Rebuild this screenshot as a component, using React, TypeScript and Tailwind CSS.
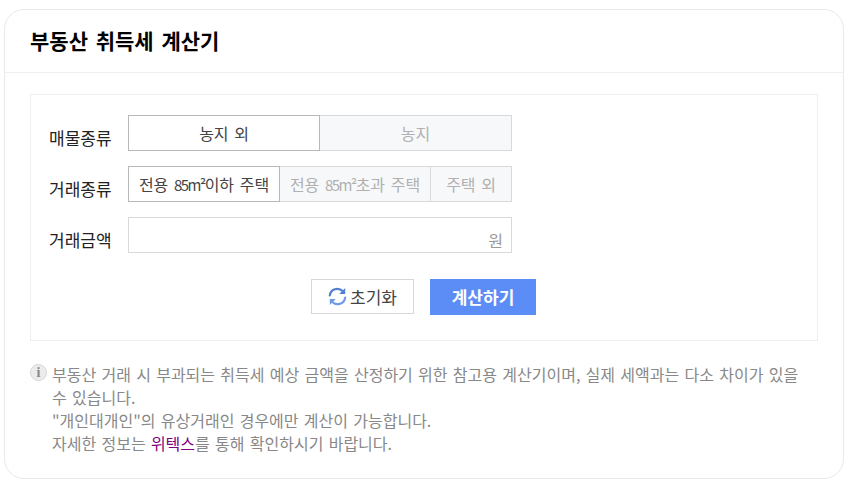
const font = '"Noto Sans CJK KR", "Noto Sans", sans-serif';

function Label({ children }: { children: React.ReactNode }) {
  return <div className="w-[97px] pl-[18px] pt-[10px] text-[17px] leading-[26px] text-[#222] [word-spacing:2px]">{children}</div>;
}

function Segment({ children, width, active }: { children: React.ReactNode; width: string; active?: boolean }) {
  return (
    <button
      className={
        active
          ? `${width} h-full border border-[#b8b8b8] bg-white text-[16px] text-[#444] whitespace-nowrap [word-spacing:2px]`
          : `${width} h-full border border-l-0 border-[#d8d9dc] bg-[#f7f8fa] text-[16px] text-[#b0b0b0] whitespace-nowrap [word-spacing:2px]`
      }
    >
      {children}
    </button>
  );
}

function Area() {
  return <span className="text-[15px] tracking-[-1.5px]">85m²</span>;
}

function RefreshIcon() {
  return (
    <svg width="19" height="19" viewBox="0 0 19 19" fill="none">
      <path d="M1.8 8.4A7.6 7.6 0 0 1 14.6 4" stroke="#4f7fd0" strokeWidth="2.2" strokeLinecap="round" />
      <path d="M17.2 10.6A7.6 7.6 0 0 1 4.4 15" stroke="#6f9ae8" strokeWidth="2.2" strokeLinecap="round" />
      <path d="M17.2 1V7H11.2Z" fill="#4f7fd0" />
      <path d="M1.8 18V12H7.8Z" fill="#6f9ae8" />
    </svg>
  );
}

function InfoIcon() {
  return (
    <span className="flex h-[17px] w-[17px] shrink-0 items-center justify-center rounded-full border border-[#d6d6d6] bg-[#ececec] font-['Liberation_Serif'] text-[14px] font-bold leading-none text-[#888]">
      i
    </span>
  );
}

export default function App() {
  return (
    <div className="min-h-[483px] bg-white pl-[4px] pr-[7px] pt-[9px]" style={{ fontFamily: font }}>
      <div className="h-[470px] w-[840px] rounded-[20px] border border-[#e9e9e9]">
        <div className="flex h-[63px] items-center border-b border-[#efefef] pl-[25px] text-[21px] font-bold text-black [word-spacing:3px]">
          부동산 취득세 계산기
        </div>
        <div className="px-[25px] pt-[21px]">
          <div className="h-[247px] border border-[#efefef] pt-[20px]">
            <div className="flex h-[36px]">
              <Label>매물종류</Label>
              <div className="flex w-[384px]">
                <Segment width="w-[192px]" active>농지 외</Segment>
                <Segment width="w-[192px]">농지</Segment>
              </div>
            </div>
            <div className="mt-[15px] flex h-[36px]">
              <Label>거래종류</Label>
              <div className="flex w-[384px]">
                <Segment width="w-[152px]" active>전용 <Area />이하 주택</Segment>
                <Segment width="w-[151px]">전용 <Area />초과 주택</Segment>
                <Segment width="w-[81px]">주택 외</Segment>
              </div>
            </div>
            <div className="mt-[15px] flex h-[36px]">
              <Label>거래금액</Label>
              <div className="flex w-[384px] items-end justify-end border border-[#d8d9dc] pr-[8px] text-[16px] text-[#999]">
                원
              </div>
            </div>
            <div className="mt-[26px] flex gap-[16px] pl-[280px]">
              <button className="flex h-[35px] w-[103px] items-center justify-center gap-[3px] border border-[#d8d8d8] bg-white text-[17px] text-[#444]">
                <RefreshIcon />
                초기화
              </button>
              <button className="h-[36px] w-[106px] bg-[#5c8df6] text-[17px] font-bold text-white">계산하기</button>
            </div>
          </div>
          <div className="mt-[22px] flex gap-[5px] text-[16px] leading-[23px] text-[#888] [word-spacing:1.7px]">
            <div className="pt-[1px]">
              <InfoIcon />
            </div>
            <div className="w-[751px]">
              <p>부동산 거래 시 부과되는 취득세 예상 금액을 산정하기 위한 참고용 계산기이며, 실제 세액과는 다소 차이가 있을 수 있습니다.</p>
              <p>"개인대개인"의 유상거래인 경우에만 계산이 가능합니다.</p>
              <p>
                자세한 정보는 <a className="text-[#800080]">위텍스</a>를 통해 확인하시기 바랍니다.
              </p>
            </div>
          </div>
        </div>
      </div>
    </div>
  );
}
